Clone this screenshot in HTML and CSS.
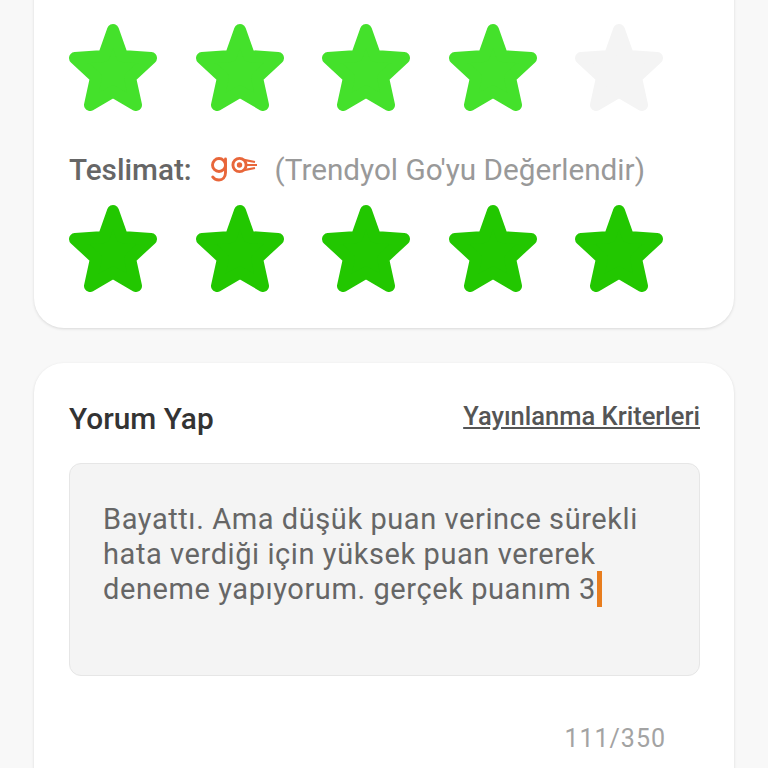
FILE: index.html
```html
<!DOCTYPE html>
<html lang="tr">
<head>
<meta charset="utf-8">
<title>Yorum Yap</title>
<link rel="stylesheet" href="styles.css">
</head>
<body>
<svg class="defs" width="0" height="0" aria-hidden="true">
  <symbol id="star" viewBox="0 0 88 88">
    <path d="M44 7 L53.200 33 L82 35 L61 54.500 L67 82 L44 68.500 L21 82 L27 54.500 L6 35 L34.800 33 Z" fill="currentColor" stroke="currentColor" stroke-width="12" stroke-linejoin="round"/>
  </symbol>
</svg>
<main class="page">
  <section class="card rating-card">
    <div class="stars stars-product">
      <svg class="star"><use href="#star"/></svg>
      <svg class="star"><use href="#star"/></svg>
      <svg class="star"><use href="#star"/></svg>
      <svg class="star"><use href="#star"/></svg>
      <svg class="star star-empty"><use href="#star"/></svg>
    </div>
    <div class="delivery">
      <span class="delivery-label">Teslimat:</span>
      <svg class="go-logo" viewBox="0 0 46 26" aria-label="go">
        <g fill="none" stroke="#e8663a" stroke-width="2.900">
          <circle cx="8" cy="9" r="6.500"/>
          <path d="M14.500 3 V16.500 C14.500 21.500 11.500 24 8 24 C5.200 24 3 23 1.800 21" stroke-linecap="round"/>
          <circle cx="28.500" cy="9" r="6.600"/>
          <path d="M33 3.800 L44 6 M35 9 H46 M33 14.200 L44 12" stroke-width="2.200"/>
        </g>
        <circle cx="28.500" cy="9" r="2.700" fill="#e8663a"/>
      </svg>
      <span class="delivery-hint">(Trendyol Go'yu Değerlendir)</span>
    </div>
    <div class="stars stars-delivery">
      <svg class="star"><use href="#star"/></svg>
      <svg class="star"><use href="#star"/></svg>
      <svg class="star"><use href="#star"/></svg>
      <svg class="star"><use href="#star"/></svg>
      <svg class="star"><use href="#star"/></svg>
    </div>
  </section>
  <section class="card comment-card">
    <header class="comment-head">
      <h2 class="comment-title">Yorum Yap</h2>
      <a class="criteria" href="#">Yayınlanma Kriterleri</a>
    </header>
    <div class="comment-box">
      <p class="comment-text">Bayattı. Ama düşük puan verince sürekli<br>hata verdiği için yüksek puan vererek<br>deneme yapıyorum. gerçek puanım 3<span class="caret"></span></p>
    </div>
    <div class="counter">111/350</div>
  </section>
</main>
</body>
</html>
```
FILE: styles.css
```css
* { box-sizing: border-box; }
html, body { margin: 0; height: 768px; overflow: hidden; background: #f8f8f8; }
body { font-family: Roboto, "Noto Sans", sans-serif; }
.defs { display: block; height: 0; }
.page { display: flex; flex-direction: column; gap: 35px; padding: 0 34px; margin-top: -40px; }
.card { width: 700px; background: #fff; border-radius: 30px; box-shadow: 0 1px 3px rgba(0,0,0,.13); padding: 0 34px 0 35px; }
.rating-card { height: 368px; padding-top: 63px; }
.stars { display: flex; gap: 38.5px; color: #44e12b; }
.star { width: 88px; height: 88px; display: block; }
.star-empty { color: #f4f4f4; }
.stars-delivery { color: #22c700; margin-top: 16px; }
.delivery { display: flex; align-items: center; height: 36px; margin-top: 41px; font-size: 29.7px; line-height: 36px; }
.delivery-label { font-weight: 500; color: #666; }
.go-logo { width: 46px; height: 26px; margin: -3px 18px 0 19px; }
.delivery-hint { color: #999; }
.comment-card { height: 500px; padding-top: 36px; }
.comment-head { display: flex; justify-content: space-between; align-items: center; height: 38px; }
.comment-title { margin: 0; font-size: 29.8px; font-weight: 500; color: #333; }
.criteria { font-size: 25.5px; font-weight: 500; color: #555; text-decoration: underline; margin-top: -4px; }
.comment-box { height: 213px; margin-top: 26px; padding: 38px 34px 0 33px; background: #f4f4f4; border: 1px solid #e6e6e6; border-radius: 12px; }
.comment-text { margin: 0; font-size: 29px; line-height: 35px; color: #666; letter-spacing: .58px; white-space: nowrap; }
.caret { display: inline-block; width: 5px; height: 36px; margin: -1px 0 0 1px; background: #e87d1e; vertical-align: top; }
.counter { margin-top: 48px; padding-right: 34px; text-align: right; font-size: 25px; line-height: 30px; letter-spacing: 1px; color: #a3a3a3; }
```
